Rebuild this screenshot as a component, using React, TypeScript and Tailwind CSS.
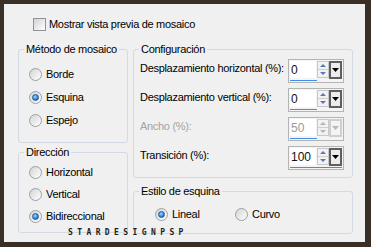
import React from "react";

function Radio({ checked = false }: { checked?: boolean }) {
  return (
    <span className="flex h-[13px] w-[13px] shrink-0 items-center justify-center rounded-full border border-[#9aa0a6] bg-gradient-to-br from-[#d4d4d4] to-white">
      {checked && (
        <span className="h-[7px] w-[7px] rounded-full border border-[#1d5a9a] bg-[radial-gradient(circle_at_40%_35%,#9fd6ff,#2a86d8_60%,#15559e)]" />
      )}
    </span>
  );
}

function RadioRow({ label, checked }: { label: string; checked?: boolean }) {
  return (
    <div className="flex h-[13px] items-center gap-[4px]">
      <Radio checked={checked} />
      <span className="leading-[13px]">{label}</span>
    </div>
  );
}

function Group({
  title,
  className,
  children,
}: {
  title: string;
  className: string;
  children: React.ReactNode;
}) {
  return (
    <fieldset className={`rounded-[3px] border border-[#d3dae1] p-0 ${className}`}>
      <legend className="ml-[5px] px-[2px] leading-[13px]">{title}</legend>
      {children}
    </fieldset>
  );
}

function SpinArrows({ disabled }: { disabled?: boolean }) {
  const c = disabled ? "#b4b4b4" : "#5b79b8";
  return (
    <svg width="12" height="17" viewBox="0 0 12 17" className="shrink-0">
      <rect x="0.5" y="0.5" width="11" height="16" fill="#f2f2f2" stroke="#c8c8c8" />
      <line x1="1" y1="8.5" x2="11" y2="8.5" stroke="#d0d0d0" />
      <path d="M3 6 L6 3 L9 6 Z" fill={c} />
      <path d="M3 11 L9 11 L6 14 Z" fill={c} />
    </svg>
  );
}

function DropButton({ disabled }: { disabled?: boolean }) {
  return (
    <span
      className={`flex h-[18px] w-[13px] shrink-0 items-center justify-center border-2 ${
        disabled ? "border-[#cfcfcf] bg-[#f4f4f4]" : "border-[#5f5f5f] bg-[#ececec]"
      }`}
    >
      <svg width="7" height="4" viewBox="0 0 7 4">
        <path d="M0 0 L7 0 L3.5 4 Z" fill={disabled ? "#b8b8b8" : "#000"} />
      </svg>
    </span>
  );
}

function SpinField({
  label,
  value,
  full,
  disabled,
}: {
  label: string;
  value: string;
  full?: boolean;
  disabled?: boolean;
}) {
  return (
    <div className="flex h-[24px] items-start">
      <span className={`mt-[3px] w-[148px] leading-[13px] ${disabled ? "text-[#a3a3a3]" : ""}`}>
        {label}
      </span>
      <div className="flex h-[24px] w-[56px] flex-col border border-[#b4b4b4] bg-[#f4f4f4] p-px">
        <div className="flex h-[18px]">
          <span
            className={`flex h-[17px] w-[27px] items-center bg-white pl-[1px] text-[12px] font-normal tracking-normal ${
              disabled ? "text-[#9a9a9a]" : "text-[#111]"
            }`}
          >
            {value}
          </span>
          <span className="w-[1px]" />
          <SpinArrows disabled={disabled} />
          <DropButton disabled={disabled} />
        </div>
        <div className={`mt-[1px] h-[3px] bg-[#3f8fea] ${full ? "w-full" : "w-[27px]"}`} />
      </div>
    </div>
  );
}

export default function App() {
  return (
    <div
      className="relative h-[247px] w-[371px] border-t-4 border-r-[6px] border-b-[5px] border-l-4 border-[#3a2f26] bg-[#f0f0f0] text-[11px] tracking-[-0.3px] text-black"
      style={{ fontFamily: '"Liberation Sans", Arial, sans-serif' }}
    >
      <div className="ml-[29px] mt-[14px] flex h-[13px] items-center gap-[3px]">
        <span className="h-[13px] w-[13px] border border-[#8f9296] bg-gradient-to-br from-[#d2d2d2] to-white" />
        <span className="leading-[13px]">Mostrar vista previa de mosaico</span>
      </div>

      <div className="ml-[14px] mt-[12px] grid grid-cols-[110px_220px] gap-x-[5px]">
        <div className="flex flex-col gap-[3px]">
          <Group title="Método de mosaico" className="h-[100px]">
            <div className="flex flex-col gap-[10px] pl-[10px] pt-[12px]">
              <RadioRow label="Borde" />
              <RadioRow label="Esquina" checked />
              <RadioRow label="Espejo" />
            </div>
          </Group>
          <Group title="Dirección" className="h-[87px]">
            <div className="flex flex-col gap-[9px] pl-[10px] pt-[7px]">
              <RadioRow label="Horizontal" />
              <RadioRow label="Vertical" />
              <RadioRow label="Bidireccional" checked />
            </div>
          </Group>
        </div>

        <div className="flex flex-col gap-[7px]">
          <Group title="Configuración" className="h-[135px]">
            <div className="flex flex-col gap-[5px] pl-[6px] pt-[3px]">
              <SpinField label="Desplazamiento horizontal (%):" value="0" />
              <SpinField label="Desplazamiento vertical (%):" value="0" />
              <SpinField label="Ancho (%):" value="50" disabled />
              <SpinField label="Transición (%):" value="100" full />
            </div>
          </Group>
          <Group title="Estilo de esquina" className="h-[49px]">
            <div className="flex pl-[21px] pt-[10px]">
              <div className="w-[80px]">
                <RadioRow label="Lineal" checked />
              </div>
              <RadioRow label="Curvo" />
            </div>
          </Group>
        </div>
      </div>

      <span
        className="absolute left-[64px] top-[225px] text-[8px] font-bold leading-[7px] tracking-[4.4px] text-[#1e1e1e]"
        style={{ fontFamily: '"DejaVu Sans Mono", monospace' }}
      >
        STARDESIGNPSP
      </span>
    </div>
  );
}
